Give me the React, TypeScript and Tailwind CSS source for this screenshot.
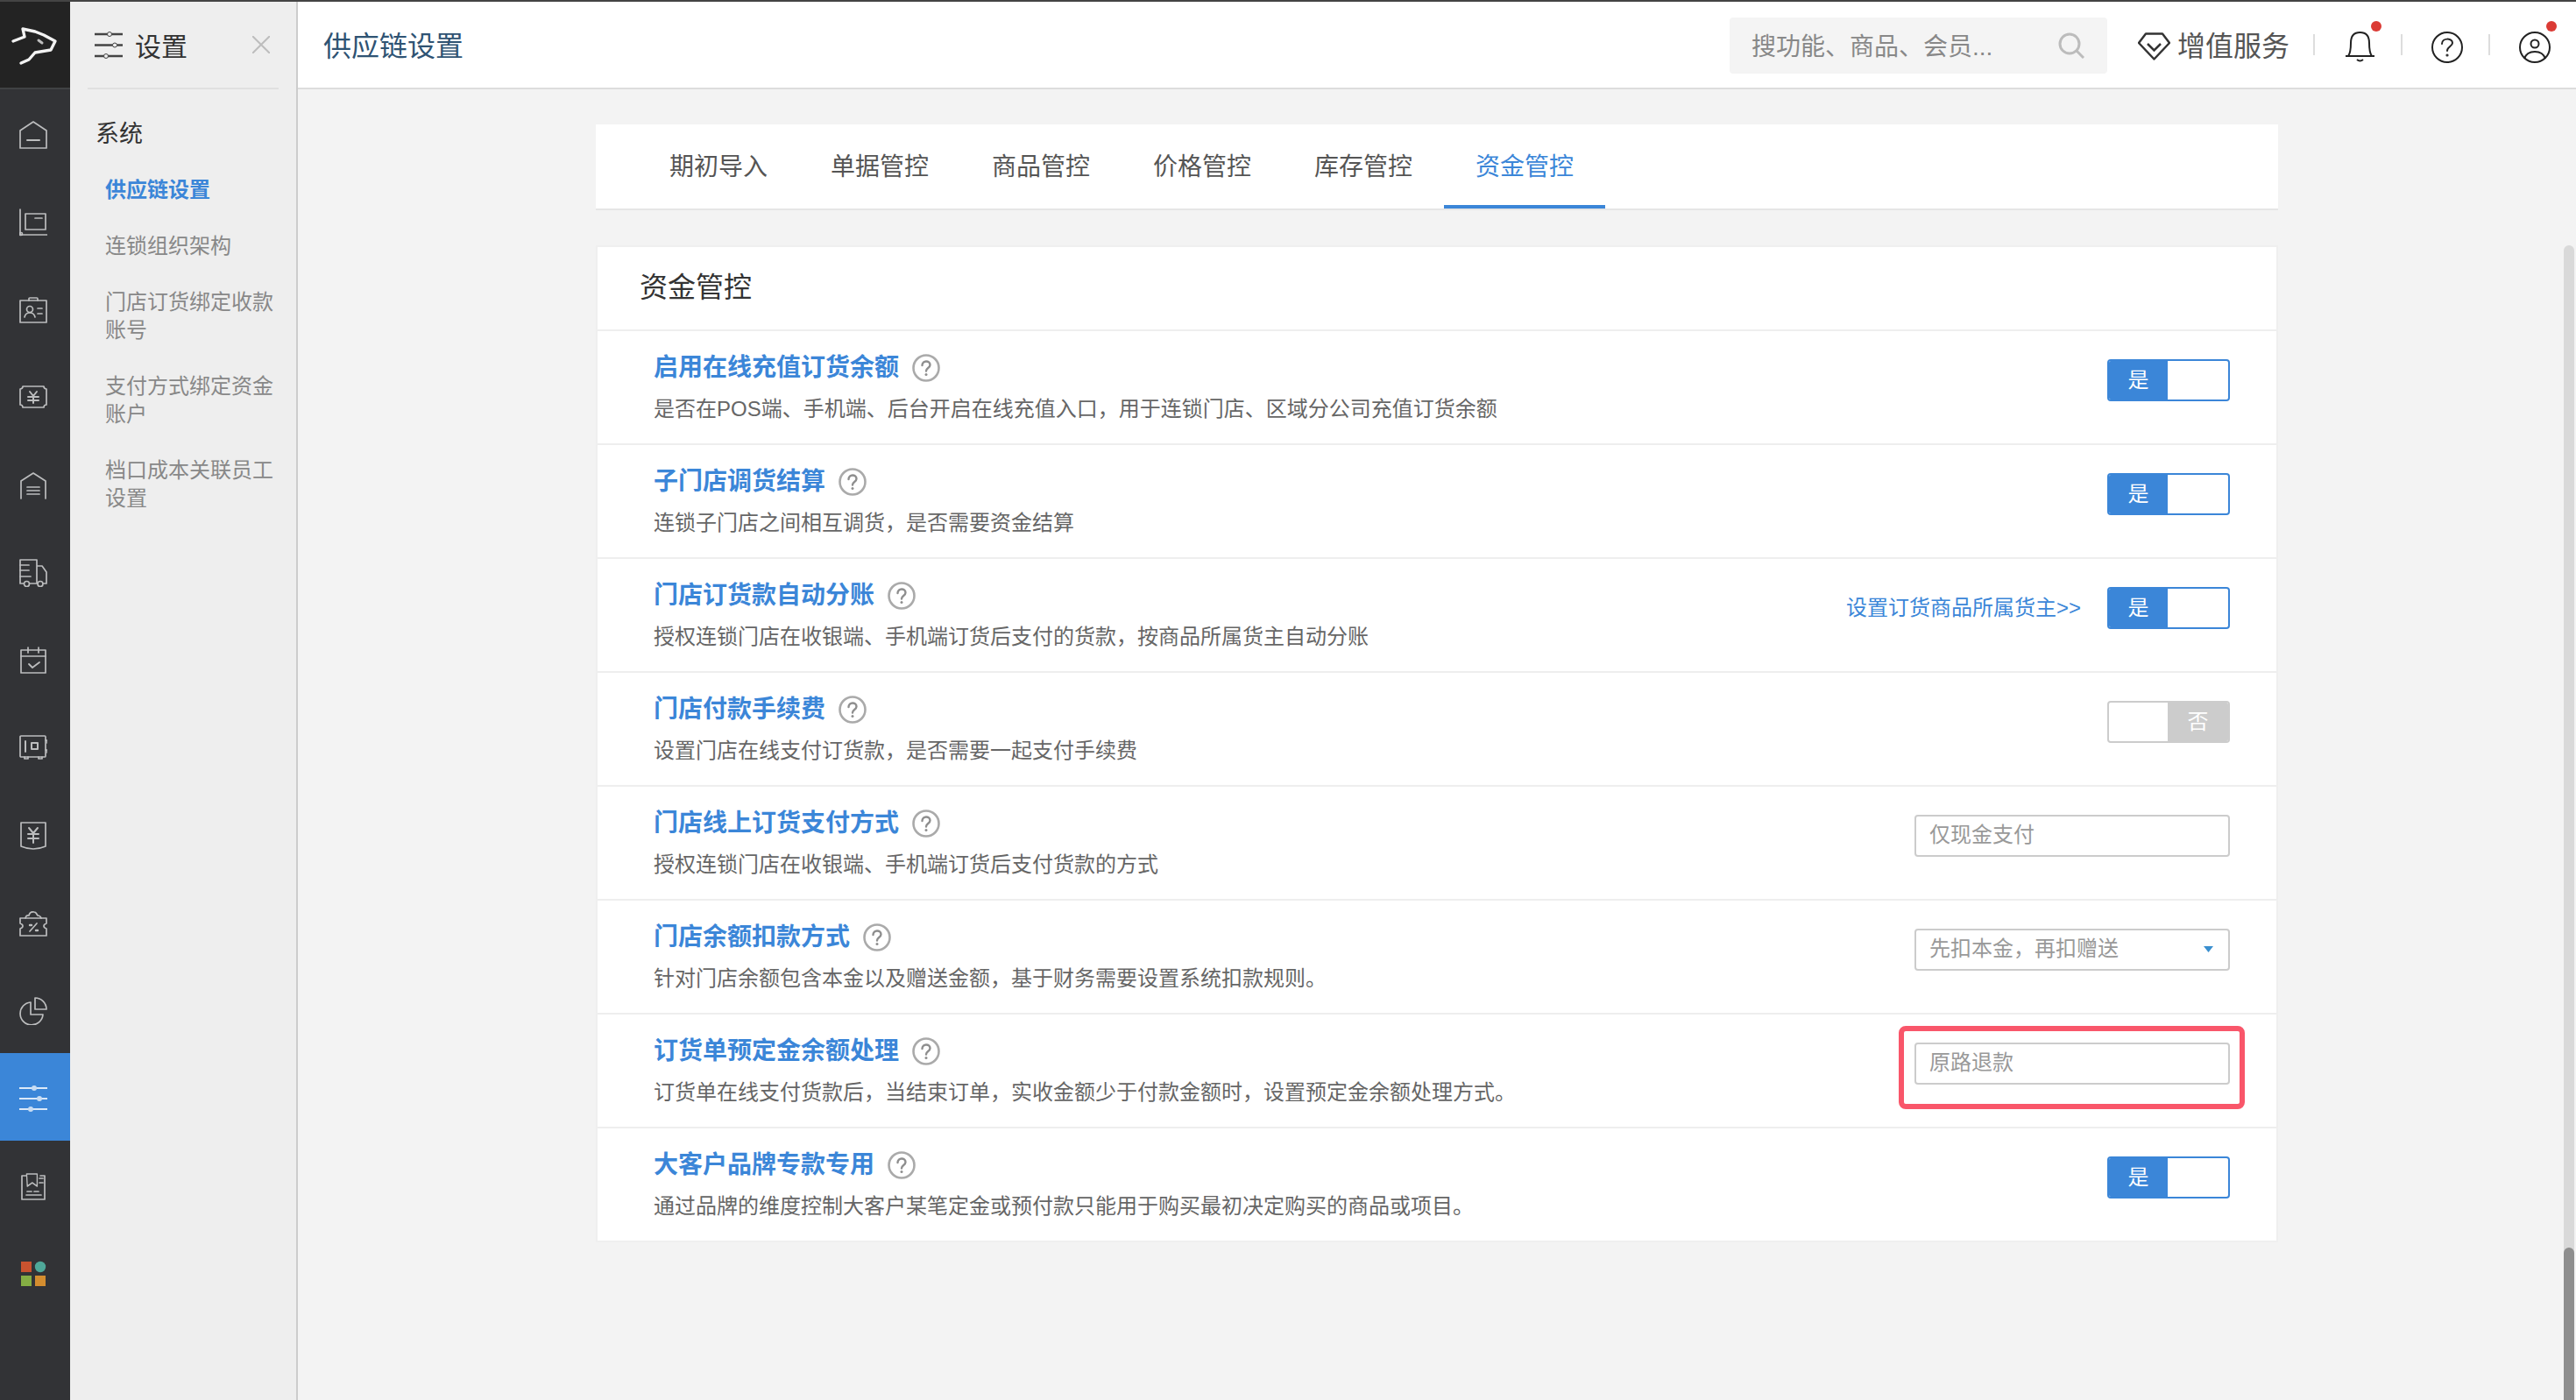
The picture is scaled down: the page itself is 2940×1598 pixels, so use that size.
import type { ReactNode } from 'react';

const FONT = '[font-family:"Liberation_Sans","Noto_Sans_CJK_SC",sans-serif]';

function RailIcon({ children }: { children: ReactNode }) {
  return (
    <svg
      width="32"
      height="32"
      viewBox="0 0 32 32"
      fill="none"
      stroke="#bcbdbe"
      strokeWidth="1.7"
      strokeLinejoin="round"
      strokeLinecap="round"
    >
      {children}
    </svg>
  );
}

const railIcons: ReactNode[] = [
  <RailIcon key="home">
    <path d="M1 11 16 1l15 10v20H1Z" />
    <path d="M9 22h14" strokeWidth="2" />
  </RailIcon>,
  <RailIcon key="order">
    <path d="M1 1v29h31" />
    <circle cx="2" cy="29" r="1.5" />
    <rect x="7" y="6" width="23" height="18" />
    <path d="M18 11h8" />
  </RailIcon>,
  <RailIcon key="member">
    <rect x="1" y="5" width="30" height="25" />
    <path d="M11 5V3q0-1 1-1h8q1 0 1 1v2" />
    <circle cx="12" cy="15" r="3.5" />
    <path d="M6 24q1-5 6-5t6 5" />
    <path d="M21 14h5M21 20h5" />
  </RailIcon>,
  <RailIcon key="cash">
    <path d="M4 3h24q0 3 3 3v18q-3 0-3 3H4q0-3-3-3V6q3 0 3-3Z" />
    <path d="m12 9 4 5 4-5M10 15h12M10 19h12M16 14v8" strokeWidth="2" />
  </RailIcon>,
  <RailIcon key="store">
    <path d="M2 31V11L16 2l14 9v20" />
    <path d="M9 18h14M9 22h14M9 26h14" />
  </RailIcon>,
  <RailIcon key="truck">
    <path d="M5 28H1V1h19v27h-8M20 8h6l5 7v13h-4M20 28h1" />
    <circle cx="8.5" cy="28.5" r="3" />
    <circle cx="24" cy="28.5" r="3" />
    <path d="M1 7h10M1 13h10M1 20h12" />
  </RailIcon>,
  <RailIcon key="calendar">
    <rect x="2" y="4" width="28" height="26" />
    <path d="M2 11h28M10 1v6M22 1v6" />
    <path d="m11 20 4 4 8-6" strokeWidth="1.8" />
  </RailIcon>,
  <RailIcon key="safe">
    <rect x="1" y="2" width="29" height="24" rx="1" />
    <path d="M7 8v12" strokeWidth="2" />
    <rect x="14" y="10" width="7" height="7" strokeWidth="2" />
    <path d="M6 26v2h4v-2M22 26v2h4v-2M30 7h2v3M30 18h2v3" />
  </RailIcon>,
  <RailIcon key="bill">
    <path d="M2 1h28v27q-14 6-28 0Z" />
    <path d="m11 7 5 6 5-6M10 14h12M10 19h12M16 13v11" strokeWidth="2" />
  </RailIcon>,
  <RailIcon key="coupon">
    <path d="M1 10h30v6q-3 1-3 3t3 3v8H1v-8q3-1 3-3t-3-3Z" />
    <path d="M7 10q1-4 4-3 1-5 6-4 2 0 4 4 3 0 4 3" />
    <path d="m12 25 8-9" />
    <path d="M12 18h2M19 24h2" strokeWidth="2.4" />
  </RailIcon>,
  <RailIcon key="pie">
    <path d="M13 6a13 13 0 1 0 14 14H13Z" />
    <path d="M18 1a13 13 0 0 1 13 13H18Z" />
  </RailIcon>,
  <svg key="sliders" width="32" height="32" viewBox="0 0 32 32" fill="none">
    <path d="M0 4h32M0 16h32M0 28h32" stroke="#dbe9f8" strokeWidth="2" />
    <circle cx="17" cy="4" r="3" fill="#c7dcf3" />
    <circle cx="23" cy="16" r="3" fill="#c7dcf3" />
    <circle cx="13" cy="28" r="3" fill="#c7dcf3" />
  </svg>,
  <RailIcon key="book">
    <path d="M8 4H3v27h26V4h-5" />
    <path d="M8 2h15v14l-7-4-7 4Z" transform="translate(2 0) scale(.8 1)" />
    <path d="M23 7h4M23 12h4M9 22h5M17 22h5M8 26h17" />
  </RailIcon>,
  <svg key="apps" width="32" height="32" viewBox="0 0 32 32">
    <rect x="2" y="2" width="12" height="12" fill="#c9532f" />
    <circle cx="24" cy="8" r="6.2" fill="#4fa899" />
    <rect x="2" y="18" width="12" height="12" fill="#85ae44" />
    <rect x="18" y="18" width="12" height="12" fill="#d48d2f" />
  </svg>,
];

const navItems = ['供应链设置', '连锁组织架构', '门店订货绑定收款账号', '支付方式绑定资金账户', '档口成本关联员工设置'];
const tabs = ['期初导入', '单据管控', '商品管控', '价格管控', '库存管控', '资金管控'];

type Control =
  | { kind: 'toggle'; on: boolean; link?: string }
  | { kind: 'input'; value: string; marked?: boolean }
  | { kind: 'select'; value: string };

const rows: { title: string; desc: string; control: Control }[] = [
  {
    title: '启用在线充值订货余额',
    desc: '是否在POS端、手机端、后台开启在线充值入口，用于连锁门店、区域分公司充值订货余额',
    control: { kind: 'toggle', on: true },
  },
  {
    title: '子门店调货结算',
    desc: '连锁子门店之间相互调货，是否需要资金结算',
    control: { kind: 'toggle', on: true },
  },
  {
    title: '门店订货款自动分账',
    desc: '授权连锁门店在收银端、手机端订货后支付的货款，按商品所属货主自动分账',
    control: { kind: 'toggle', on: true, link: '设置订货商品所属货主>>' },
  },
  {
    title: '门店付款手续费',
    desc: '设置门店在线支付订货款，是否需要一起支付手续费',
    control: { kind: 'toggle', on: false },
  },
  {
    title: '门店线上订货支付方式',
    desc: '授权连锁门店在收银端、手机端订货后支付货款的方式',
    control: { kind: 'input', value: '仅现金支付' },
  },
  {
    title: '门店余额扣款方式',
    desc: '针对门店余额包含本金以及赠送金额，基于财务需要设置系统扣款规则。',
    control: { kind: 'select', value: '先扣本金，再扣赠送' },
  },
  {
    title: '订货单预定金余额处理',
    desc: '订货单在线支付货款后，当结束订单，实收金额少于付款金额时，设置预定金余额处理方式。',
    control: { kind: 'input', value: '原路退款', marked: true },
  },
  {
    title: '大客户品牌专款专用',
    desc: '通过品牌的维度控制大客户某笔定金或预付款只能用于购买最初决定购买的商品或项目。',
    control: { kind: 'toggle', on: true },
  },
];

function Toggle({ on }: { on: boolean }) {
  if (on) {
    return (
      <div className="flex h-12 w-[140px] overflow-hidden rounded-[4px] border-2 border-[#3b86d8] bg-white">
        <div className="flex w-[67px] items-center justify-center bg-[#3b86d8] text-[24px] leading-none text-white">是</div>
      </div>
    );
  }
  return (
    <div className="flex h-12 w-[140px] justify-end overflow-hidden rounded-[4px] border-2 border-[#cccccc] bg-white">
      <div className="flex w-[69px] items-center justify-center bg-[#cccccc] text-[24px] leading-none text-white">否</div>
    </div>
  );
}

function RowControl({ control }: { control: Control }) {
  if (control.kind === 'toggle') {
    return (
      <div className="flex items-center">
        {control.link && <span className="mr-[30px] text-[24px] leading-[32px] text-[#3b86d8]">{control.link}</span>}
        <Toggle on={control.on} />
      </div>
    );
  }
  return (
    <div className="relative">
      <div className="flex h-12 w-[360px] items-center justify-between rounded-[4px] border-2 border-[#cccccc] bg-white pr-[17px] pb-[2px] pl-[15px] text-[24px] leading-none text-[#999999]">
        <span>{control.value}</span>
        {control.kind === 'select' && (
          <svg width="11" height="7" viewBox="0 0 11 7">
            <path d="M0 0h11L5.5 7Z" fill="#3a8fcf" />
          </svg>
        )}
      </div>
      {control.kind === 'input' && control.marked && (
        <div className="absolute -top-[19px] -right-[17px] -bottom-[28px] -left-[18px] rounded-[8px] border-[6px] border-[#f9566a]" />
      )}
    </div>
  );
}

function HelpIcon() {
  return (
    <svg className="ml-[15px]" width="32" height="32" viewBox="0 0 32 32" fill="none">
      <circle cx="16" cy="16" r="14.5" stroke="#aaaaaa" strokeWidth="2.6" />
      <path d="M11.5 13c0-6 9-6 9-.5 0 3.500-4.500 3.500-4.500 7" stroke="#8e8e8e" strokeWidth="2.4" strokeLinecap="round" />
      <circle cx="16" cy="23.500" r="1.500" fill="#8e8e8e" />
    </svg>
  );
}

function Separator() {
  return <div className="mb-[2px] h-6 w-[2px] bg-[#dddddd]" />;
}

function RedDot({ className }: { className: string }) {
  return <span className={`absolute h-3 w-3 rounded-full bg-[#db3b35] ${className}`} />;
}

export default function App() {
  return (
    <div className={`flex h-[1598px] w-full flex-col overflow-hidden border-t-2 border-[#444444] ${FONT}`}>
      <div className="relative flex flex-1">
        {/* icon rail */}
        <aside className="flex w-[80px] shrink-0 flex-col bg-[#323336]">
          <div className="h-[100px] border-b-2 border-[#404244] bg-[#232323]">
            <svg width="80" height="98" viewBox="0 2 80 98" fill="none">
              <path
                d="M15 47 28 42 26 33 40 36 50 40 63 47 58 57 40 60 33 68 24 72"
                stroke="#f2f2f2"
                strokeWidth="3.4"
                strokeLinejoin="round"
                strokeLinecap="round"
              />
              <path d="M44 46 48 49" stroke="#bdbdbd" strokeWidth="3" strokeLinecap="round" />
            </svg>
          </div>
          {railIcons.map((icon, i) => (
            <div key={i} className={`flex h-[100px] items-center pt-1 pl-[22px] ${i === 11 ? 'bg-[#3b86d8]' : ''}`}>
              {icon}
            </div>
          ))}
        </aside>

        {/* settings nav */}
        <aside className="w-[260px] shrink-0 border-r-2 border-[#cccccc] bg-[#eeeeee]">
          <div className="mx-[20px] flex h-[100px] items-center border-b-2 border-[#e0e0e0] pr-[10px] pl-[8px]">
            <svg width="32" height="32" viewBox="0 0 32 32" fill="none">
              <path d="M0 4h32M0 16.500h32M0 29h32" stroke="#444444" strokeWidth="2.4" />
              <circle cx="17" cy="4" r="2.500" fill="#eeeeee" stroke="#444444" />
              <circle cx="23" cy="16.500" r="2.500" fill="#eeeeee" stroke="#444444" />
              <circle cx="13" cy="29" r="2.500" fill="#eeeeee" stroke="#444444" />
            </svg>
            <span className="ml-[14px] block pt-[5px] text-[30px] leading-[40px] text-[#333333]">设置</span>
            <svg className="ml-auto" width="20" height="20" viewBox="0 0 20 20" fill="none">
              <path d="m0 0 20 20M20 0 0 20" stroke="#bdbdbd" strokeWidth="2" />
            </svg>
          </div>
          <div className="mt-[35px] ml-[29px] text-[27px] leading-[32px] text-[#333333]">系统</div>
          <ul className="mt-[32px] ml-[40px] flex w-[196px] flex-col gap-[32px]">
            {navItems.map((item, i) => (
              <li
                key={item}
                className={`text-[24px] leading-[32px] ${i === 0 ? 'font-bold text-[#3b86d8]' : 'text-[#888888]'}`}
              >
                {item}
              </li>
            ))}
          </ul>
        </aside>

        {/* main column */}
        <main className="flex min-w-0 flex-1 flex-col bg-[#f3f3f3]">
          <header className="flex h-[100px] shrink-0 items-center border-b-2 border-[#dddddd] bg-white pt-[2px] pr-[29px] pl-[29px]">
            <h1 className="pt-[2px] text-[32px] leading-[40px] font-normal text-[#2f5373]">供应链设置</h1>
            <div className="ml-auto flex h-16 w-[431px] items-center justify-between rounded-[4px] bg-[#f4f4f4] pr-[26px] pl-[25px]">
              <span className="block pt-[4px] text-[28px] leading-none text-[#888888]">搜功能、商品、会员...</span>
              <svg width="30" height="30" viewBox="0 0 30 30" fill="none">
                <circle cx="13" cy="13" r="11" stroke="#bcbcbc" strokeWidth="3" />
                <path d="m21 21 8 8" stroke="#bcbcbc" strokeWidth="3" />
              </svg>
            </div>
            <svg className="mt-[2px] ml-[35px]" width="37" height="32" viewBox="0 0 37 32" fill="none">
              <path d="M9 1.500h19L36 12 18.500 30.500 1 12Z" stroke="#333333" strokeWidth="2.500" strokeLinejoin="round" />
              <path d="m11 13 7.500 7.500L26 13" stroke="#333333" strokeWidth="2.500" />
            </svg>
            <span className="ml-[8px] block pt-[2px] text-[32px] leading-[40px] text-[#555555]">增值服务</span>
            <div className="mr-[35px] ml-[27px]">
              <Separator />
            </div>
            <div className="relative mt-[4px] mr-[30px] h-9 w-[33px]">
              <svg width="33" height="36" viewBox="0 0 33 36" fill="none" stroke="#222222" strokeWidth="2">
                <path d="M0 28h33M3 28c3-4 3-9 3-15C6 5 10 1 16.500 1S27 5 27 13c0 6 0 11 3 15" />
                <path d="M13 32q3.500 3 7 0" />
              </svg>
              <RedDot className="-top-[12px] -right-[8px]" />
            </div>
            <Separator />
            <svg className="mt-[4px] mr-[29px] ml-[33px]" width="36" height="36" viewBox="0 0 36 36" fill="none" stroke="#222222" strokeWidth="2">
              <circle cx="18" cy="18" r="17" />
              <path d="M12 14c0-7 12-7 12-1 0 4-6 4-6 9" strokeLinecap="round" />
              <circle cx="18" cy="27" r=".6" fill="#222222" />
            </svg>
            <Separator />
            <div className="relative mt-[4px] ml-[33px] h-9 w-9">
              <svg width="36" height="36" viewBox="0 0 36 36" fill="none" stroke="#222222" strokeWidth="2">
                <circle cx="18" cy="18" r="17" />
                <circle cx="18" cy="14" r="4.500" />
                <path d="M6 31c2-6 7-8 12-8s10 2 12 8" />
              </svg>
              <RedDot className="-top-[12px] -right-[7px]" />
            </div>
          </header>

          <div className="mx-auto flex w-[1920px] flex-col gap-[40px] pt-[40px]">
            <nav className="flex h-[98px] border-b-2 border-[#e5e5e5] bg-white pl-[48px]">
              {tabs.map((tab, i) => (
                <div
                  key={tab}
                  className={`flex h-[96px] w-[184px] items-center justify-center border-b-4 pt-[6px] text-[28px] leading-none ${
                    i === 5 ? 'border-[#3b86d8] text-[#3b86d8]' : 'border-transparent text-[#555555]'
                  }`}
                >
                  {tab}
                </div>
              ))}
            </nav>

            <section className="border-2 border-[#efefef] bg-white">
              <h2 className="flex h-[96px] items-center border-b-2 border-[#eeeeee] pb-[3px] pl-[48px] text-[32px] leading-[40px] font-normal text-[#333333]">
                资金管控
              </h2>
              {rows.map((row, i) => (
                <div
                  key={row.title}
                  className={`flex items-start justify-between pr-[53px] pl-[64px] ${
                    i < rows.length - 1 ? 'h-[130px] border-b-2 border-[#eeeeee]' : 'h-[128px]'
                  }`}
                >
                  <div className="pt-[22px]">
                    <div className="flex h-[40px] items-center">
                      <span className="text-[28px] leading-[40px] font-bold text-[#3b86d8]">{row.title}</span>
                      <HelpIcon />
                    </div>
                    <p className="mt-[11px] text-[24px] leading-[32px] text-[#666666]">{row.desc}</p>
                  </div>
                  <div className="pt-[32px]">
                    <RowControl control={row.control} />
                  </div>
                </div>
              ))}
            </section>
          </div>
        </main>

        {/* scrollbar overlay */}
        <div className="absolute top-[278px] right-[2px] bottom-0 w-[12px] rounded-t-full bg-[#d9d9d9]">
          <div className="absolute top-[1144px] right-0 bottom-0 left-0 rounded-t-full bg-[#8e8e8e]" />
        </div>
      </div>
    </div>
  );
}
